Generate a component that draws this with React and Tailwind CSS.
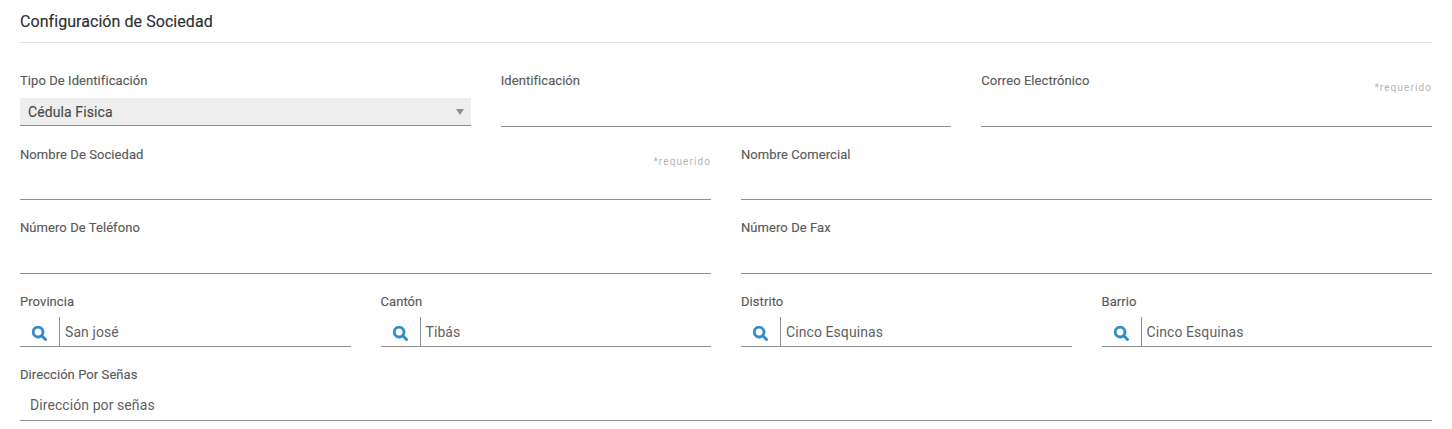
import React from 'react';
import { FaSearch } from 'react-icons/fa';

const labelClass = 'block text-[13px] leading-[20px] tracking-[0.07px] text-[#5a5a5a] [-webkit-text-stroke:0.15px_#5a5a5a]';

const Field = ({ label, required, value }) => (
  <div className="relative h-[73.5px]">
    <label className={`${labelClass} pt-[6.5px] box-content`}>{label}</label>
    {required && (
      <span className="absolute right-0 top-[16.5px] text-[10px] leading-[14px] tracking-[1.1px] text-[#b5b5b5]">*requerido</span>
    )}
    <div className="mt-[8.5px] h-[27px] border-b border-[#8f8f8f] pl-[10px] text-[14px] leading-[22px] tracking-[0.08px] text-[#5f5f5f]">{value}</div>
  </div>
);

const SearchField = ({ label, value }) => (
  <div className="h-[73.5px]">
    <label className={`${labelClass} pt-[6px] box-content`}>{label}</label>
    <div className="mt-[5px] flex h-[30px] items-stretch border-b border-[#8f8f8f] text-[14px] tracking-[0.08px] text-[#5f5f5f]">
      <div className="flex w-[40px] items-center justify-center border-r border-[#8f8f8f]">
        <FaSearch className="mt-[5px] h-[15px] w-[15px] stroke-[#2e8bcb] stroke-[16] text-[#2e8bcb]" />
      </div>
      <span className="pl-[5px] leading-[30px]">{value}</span>
    </div>
  </div>
);

export default function App() {
  return (
    <div className="h-[429px] overflow-hidden bg-white px-[20px] font-['Roboto',sans-serif]">
      <h2 className="h-[43px] border-b border-[#e2e2e6] pt-[11px] text-[16px] leading-[22px] tracking-[0.06px] text-[#2b2f33] [-webkit-text-stroke:0.15px_#2b2f33]">
        Configuración de Sociedad
      </h2>
      <div className="mt-[27px] grid grid-cols-3 gap-x-[30px]">
        <div className="h-[73.5px]">
          <label className={`${labelClass} pt-[1px] box-content`}>Tipo De Identificación</label>
          <div className="mt-[7px] flex h-[28px] items-center justify-between border-b border-[#8f8f8f] bg-[#eeeeee] pl-[8px] pr-[7px] pt-[1px] text-[14px] tracking-[0.1px] text-[#4a4a4a] [-webkit-text-stroke:0.15px_#4a4a4a]">
            <span>Cédula Fisica</span>
            <span className="h-0 w-0 border-x-[4px] border-t-[6px] border-x-transparent border-t-[#8f8f8f]" />
          </div>
        </div>
        <div className="-mt-[5.5px]"><Field label="Identificación" /></div>
        <div className="-mt-[5.5px]"><Field label="Correo Electrónico" required /></div>
      </div>
      <div className="-mt-[5.5px] grid grid-cols-2 gap-x-[30px]">
        <Field label="Nombre De Sociedad" required />
        <Field label="Nombre Comercial" />
        <Field label="Número De Teléfono" />
        <Field label="Número De Fax" />
      </div>
      <div className="mt-[0.5px] grid grid-cols-4 gap-x-[30px]">
        <SearchField label="Provincia" value="San josé" />
        <SearchField label="Cantón" value="Tibás" />
        <SearchField label="Distrito" value="Cinco Esquinas" />
        <SearchField label="Barrio" value="Cinco Esquinas" />
      </div>
      <div className="-mt-[0.5px]">
        <Field label="Dirección Por Señas" value="Dirección por señas" />
      </div>
    </div>
  );
}
